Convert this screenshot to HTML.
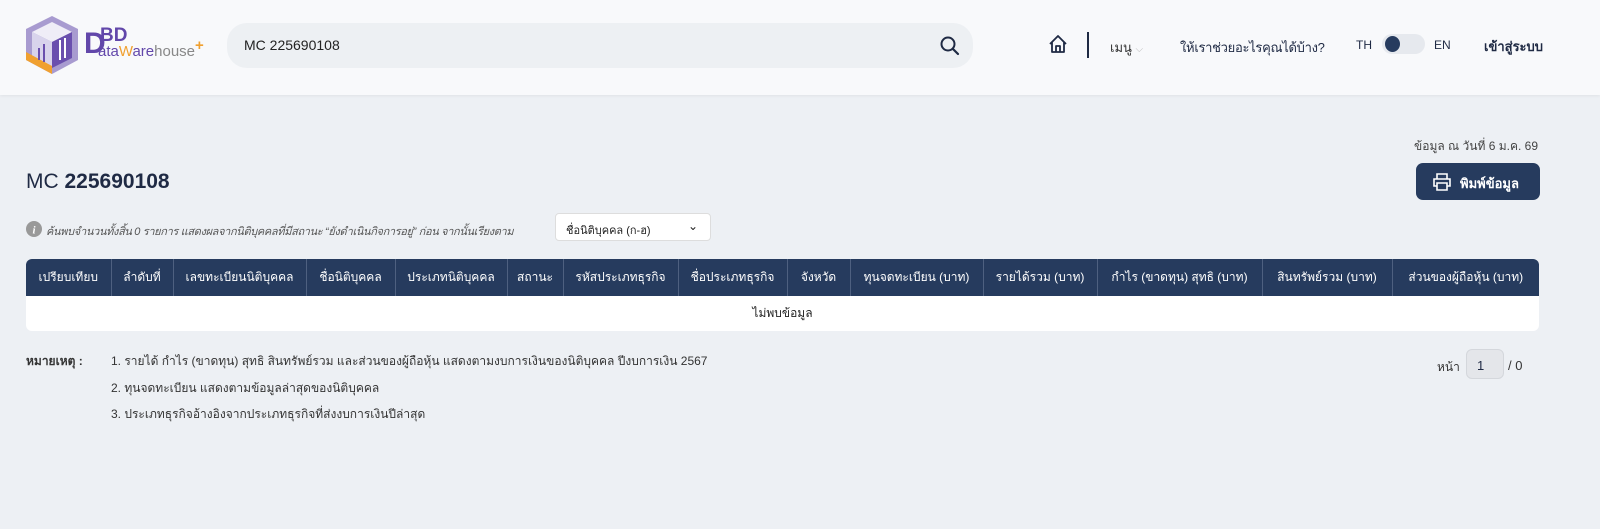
<!DOCTYPE html>
<html><head><meta charset="utf-8">
<style>
*{box-sizing:border-box;margin:0;padding:0}
body{width:1600px;height:529px;background:#edf0f4;font-family:"Liberation Sans","Noto Sans CJK SC",sans-serif;color:#1f2a44;position:relative;overflow:hidden}
.hdr{position:absolute;left:0;top:0;width:1600px;height:95px;background:#f8f9fb;box-shadow:0 1px 3px rgba(0,0,0,.06)}
.abs{position:absolute;white-space:nowrap}
.search{left:227px;top:23px;width:746px;height:45px;background:#edf0f3;border-radius:20px}
.search span{position:absolute;left:17px;top:14px;font-size:14px;color:#222}
table{position:absolute;left:26px;top:259px;width:1513px;border-collapse:collapse;font-size:12px;table-layout:fixed}
th{background:#263b5e;color:#fff;font-weight:normal;height:37px;border-right:1px solid #4e6080;white-space:nowrap;overflow:hidden}
th:last-child{border-right:none}
td{background:#fff;height:35px;text-align:center;font-size:12px;color:#222}
.note{font-size:12px;color:#333}
</style></head><body>
<div class="hdr">
  <svg class="abs" style="left:26px;top:14px" width="60" height="62" viewBox="0 0 60 62">
    <polygon points="26,2 52,15 52,46 26,60 0,46 0,15" fill="#a89bd0"/>
    <polygon points="26,8 46,18 26,28 6,18" fill="#efedf7"/>
    <polygon points="6,18 26,28 26,54 6,44" fill="#d8d3ec"/>
    <polygon points="26,28 46,18 46,44 26,54" fill="#6a4fae"/>
    <polygon points="0,38 0,46 26,60 26,52" fill="#f0a030"/>
    <rect x="12" y="34" width="2" height="12" fill="#6a4fae"/><rect x="17" y="30" width="2" height="18" fill="#6a4fae"/><rect x="33" y="26" width="2" height="20" fill="#fff"/><rect x="38" y="24" width="2" height="20" fill="#fff"/>
  </svg>
  <div class="abs" style="left:84px;top:27px;font-size:30px;color:#6247aa;font-weight:bold;letter-spacing:-3px">D</div>
  <div class="abs" style="left:100px;top:25px;font-size:19px;color:#6247aa;font-weight:bold">BD</div>
  <div class="abs" style="left:98px;top:43px;font-size:15px;color:#6247aa">ata<span style="color:#f0a030">W</span>are<span style="color:#888">house</span><span style="color:#f0a030;font-weight:bold;position:relative;top:-6px">+</span></div>
  <div class="abs search"><span>MC 225690108</span>
    <svg class="abs" style="left:713px;top:13px" width="20" height="20" viewBox="0 0 20 20"><circle cx="8" cy="8" r="6.5" fill="none" stroke="#1f2a44" stroke-width="2"/><line x1="13" y1="13" x2="18" y2="18" stroke="#1f2a44" stroke-width="2.2" stroke-linecap="round"/></svg>
  </div>
  <svg class="abs" style="left:1048px;top:34px" width="20" height="20" viewBox="0 0 20 20"><path d="M2 10 L10 2 L18 10 M4 8 V18 H16 V8 M8 18 V12 H12 V18" fill="none" stroke="#1f2a44" stroke-width="1.8" stroke-linejoin="round"/></svg>
  <div class="abs" style="left:1087px;top:32px;width:2px;height:26px;background:#1f2a44"></div>
  <div class="abs" style="left:1110px;top:37px;font-size:13px;color:#333">เมนู <span style="color:#bbb;font-size:10px">⌵</span></div>
  <div class="abs" style="left:1180px;top:37px;font-size:13px;color:#1f2a44;letter-spacing:-0.3px">ให้เราช่วยอะไรคุณได้บ้าง?</div>
  <div class="abs" style="left:1356px;top:38px;font-size:12px">TH</div>
  <div class="abs" style="left:1382px;top:34px;width:43px;height:20px;border-radius:10px;background:#e6e9ee"></div>
  <div class="abs" style="left:1385px;top:36px;width:15px;height:16px;border-radius:50%;background:#263b5e"></div>
  <div class="abs" style="left:1434px;top:38px;font-size:12px">EN</div>
  <div class="abs" style="left:1484px;top:36px;font-size:13px;font-weight:bold">เข้าสู่ระบบ</div>
</div>
<div class="abs" style="right:62px;top:137px;font-size:12px;color:#444">ข้อมูล ณ วันที่ 6 ม.ค. 69</div>
<div class="abs" style="left:26px;top:170px;font-size:21px;color:#1f2a44">MC <span style="font-weight:600">225690108</span></div>
<div class="abs" style="left:1416px;top:163px;width:124px;height:37px;background:#263b5e;border-radius:7px;color:#fff;font-size:13px;font-weight:bold">
  <svg class="abs" style="left:17px;top:10px" width="18" height="18" viewBox="0 0 18 18"><path d="M4 6 V1 H14 V6 M4 13 H1 V6 H17 V13 H14 M4 10 H14 V17 H4 Z" fill="none" stroke="#fff" stroke-width="1.6"/></svg>
  <span class="abs" style="left:44px;top:10px">พิมพ์ข้อมูล</span></div>
<svg class="abs" style="left:26px;top:221px" width="16" height="16"><circle cx="8" cy="8" r="8" fill="#999"/><text x="8" y="12.5" font-size="11" fill="#fff" text-anchor="middle" font-style="italic" font-weight="bold" font-family="Liberation Serif">i</text></svg>
<div class="abs" style="left:46px;top:222px;font-size:11px;font-style:italic;color:#555;letter-spacing:-0.35px">ค้นพบจำนวนทั้งสิ้น 0 รายการ แสดงผลจากนิติบุคคลที่มีสถานะ “ยังดำเนินกิจการอยู่” ก่อน จากนั้นเรียงตาม</div>
<div class="abs" style="left:555px;top:213px;width:156px;height:28px;background:#fff;border:1px solid #ddd;border-radius:4px;font-size:11px;color:#222"><span class="abs" style="left:10px;top:7px">ชื่อนิติบุคคล (ก-ฮ)</span><span class="abs" style="left:132px;top:5px;font-size:12px">⌄</span></div>
<table>
<tr>
<th style="width:85px;border-radius:6px 0 0 0">เปรียบเทียบ</th><th style="width:62px">ลำดับที่</th><th style="width:133px">เลขทะเบียนนิติบุคคล</th><th style="width:89px">ชื่อนิติบุคคล</th><th style="width:112px">ประเภทนิติบุคคล</th><th style="width:56px">สถานะ</th><th style="width:115px">รหัสประเภทธุรกิจ</th><th style="width:109px">ชื่อประเภทธุรกิจ</th><th style="width:63px">จังหวัด</th><th style="width:133px">ทุนจดทะเบียน (บาท)</th><th style="width:114px">รายได้รวม (บาท)</th><th style="width:165px">กำไร (ขาดทุน) สุทธิ (บาท)</th><th style="width:130px">สินทรัพย์รวม (บาท)</th><th style="width:147px;border-radius:0 6px 0 0">ส่วนของผู้ถือหุ้น (บาท)</th>
</tr>
<tr><td colspan="14" style="border-radius:0 0 6px 6px">ไม่พบข้อมูล</td></tr>
</table>
<div class="abs note" style="left:26px;top:352px;font-weight:bold">หมายเหตุ :</div>
<div class="abs note" style="left:111px;top:352px">1. รายได้ กำไร (ขาดทุน) สุทธิ สินทรัพย์รวม และส่วนของผู้ถือหุ้น แสดงตามงบการเงินของนิติบุคคล ปีงบการเงิน 2567</div>
<div class="abs note" style="left:111px;top:379px">2. ทุนจดทะเบียน แสดงตามข้อมูลล่าสุดของนิติบุคคล</div>
<div class="abs note" style="left:111px;top:405px">3. ประเภทธุรกิจอ้างอิงจากประเภทธุรกิจที่ส่งงบการเงินปีล่าสุด</div>
<div class="abs note" style="left:1437px;top:358px">หน้า</div>
<div class="abs" style="left:1466px;top:349px;width:38px;height:30px;background:#e4e6ea;border:1px solid #d4d7dc;border-radius:6px;font-size:13px;padding:8px 0 0 10px">1</div>
<div class="abs note" style="left:1508px;top:358px;font-size:13px">/ 0</div>
</body></html>
